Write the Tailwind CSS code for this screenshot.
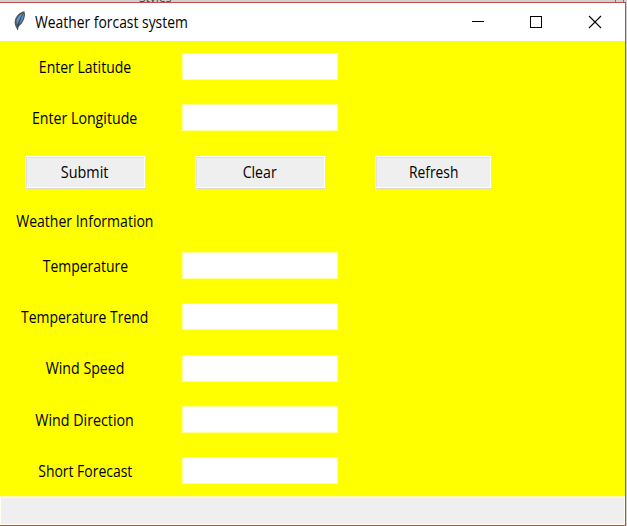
<!DOCTYPE html>
<html lang="en">
<head>
<meta charset="utf-8">
<title>Weather forcast system</title>
<script src="https://cdn.jsdelivr.net/npm/@tailwindcss/browser@4"></script>
</head>
<body class="w-[627px] h-[526px] overflow-hidden bg-[#d2cfd0] font-['Open_Sans','Noto_Sans',sans-serif] text-[15.5px] leading-5 text-black">
<div class="relative h-[2px] overflow-hidden"><span class="absolute left-[139px] -top-[10px] text-[12px] leading-[15px] text-[#444]">Styles</span><span class="absolute left-[615px] top-0 w-[9px] h-[2px] border-x border-[#777]"></span></div>
<main class="flex flex-col w-[626px] h-[524px] border-t border-r border-b border-[#b94d50]">
  <header class="flex h-[38px] shrink-0 bg-white">
    <svg class="w-[14px] h-[22px] ml-3 mt-[7px] shrink-0" viewBox="0 0 14 22">
      <path d="M12.500 1.200C9 1.500 5 4.500 3.200 9c-.8 2.700-.7 5 .3 7.200L5.500 20l1-3.300C10.500 14 12.700 9 13 4.500z" fill="#50555a"/>
      <path d="M11.800 3C8 4 5.200 7.500 4.500 11l.3 3.500L10.500 5.500 7 14.500c3-2.500 4.900-6.500 4.800-11.500z" fill="#5d96d4"/>
      <path d="M11.500 3C8.500 7.500 6.500 12 5.500 20" fill="none" stroke="#283b50" stroke-width=".8"/>
    </svg>
    <h1 class="ml-[9px] mt-[9px] w-[153px] whitespace-nowrap"><span class="inline-block origin-left scale-x-[.895]">Weather forcast system</span></h1>
    <svg class="ml-auto mt-3 w-[131px] h-[14px]" viewBox="0 0 131 14" fill="none" stroke="#000" shape-rendering="crispEdges">
      <path d="M0 6.500h12M58.500 1.500h11v11h-11z"/>
      <path d="M117 1l12 12M129 1l-12 12" shape-rendering="auto" stroke-width="1.100"/>
    </svg>
    <span class="w-[22px]"></span>
  </header>
  <section class="grid h-[455px] shrink-0 bg-[#ff0] grid-cols-[170px_180px_167px] grid-rows-[51px_51px_58px_39px_51px_51px_52px_51px_51px] items-center justify-items-center whitespace-nowrap">
    <label><span class="inline-block scale-x-[.905]">Enter Latitude</span></label><input class="w-[156px] h-[27px] bg-white border border-[#ffff9a]"><i></i>
    <label><span class="inline-block scale-x-[.915]">Enter Longitude</span></label><input class="w-[156px] h-[27px] bg-white border border-[#ffff9a]"><i></i>
    <button class="w-[121px] h-[33px] bg-[#efefef] border border-t-white border-l-white border-r-[#e6e6c8] border-b-[#d9d9c8] shadow-[inset_-1px_-1px_#fff,inset_1px_1px_#e2e2e2]"><span class="inline-block scale-x-[.93]">Submit</span></button>
    <button class="w-[131px] h-[33px] bg-[#efefef] border border-t-white border-l-white border-r-[#e6e6c8] border-b-[#d9d9c8] shadow-[inset_-1px_-1px_#fff,inset_1px_1px_#e2e2e2]"><span class="inline-block scale-x-[.91]">Clear</span></button>
    <button class="w-[117px] h-[33px] bg-[#efefef] border border-t-white border-l-white border-r-[#e6e6c8] border-b-[#d9d9c8] shadow-[inset_-1px_-1px_#fff,inset_1px_1px_#e2e2e2]"><span class="inline-block scale-x-[.89]">Refresh</span></button>
    <p><span class="inline-block scale-x-[.905]">Weather Information</span></p><i></i><i></i>
    <label><span class="inline-block scale-x-[.9]">Temperature</span></label><input class="w-[156px] h-[27px] bg-white border border-[#ffff9a]"><i></i>
    <label><span class="inline-block scale-x-[.9]">Temperature Trend</span></label><input class="w-[156px] h-[27px] bg-white border border-[#ffff9a]"><i></i>
    <label><span class="inline-block scale-x-[.915]">Wind Speed</span></label><input class="w-[156px] h-[27px] bg-white border border-[#ffff9a]"><i></i>
    <label><span class="inline-block scale-x-[.92]">Wind Direction</span></label><input class="w-[156px] h-[27px] bg-white border border-[#ffff9a]"><i></i>
    <label><span class="inline-block scale-x-[.9]">Short Forecast</span></label><input class="w-[156px] h-[27px] bg-white border border-[#ffff9a]"><i></i>
  </section>
  <footer class="h-[29px] shrink-0 bg-[#efefef] border border-[#fffff0] border-t-[#ffffb0] shadow-[inset_0_1px_#fafae8]"></footer>
</main>
</body>
</html>
